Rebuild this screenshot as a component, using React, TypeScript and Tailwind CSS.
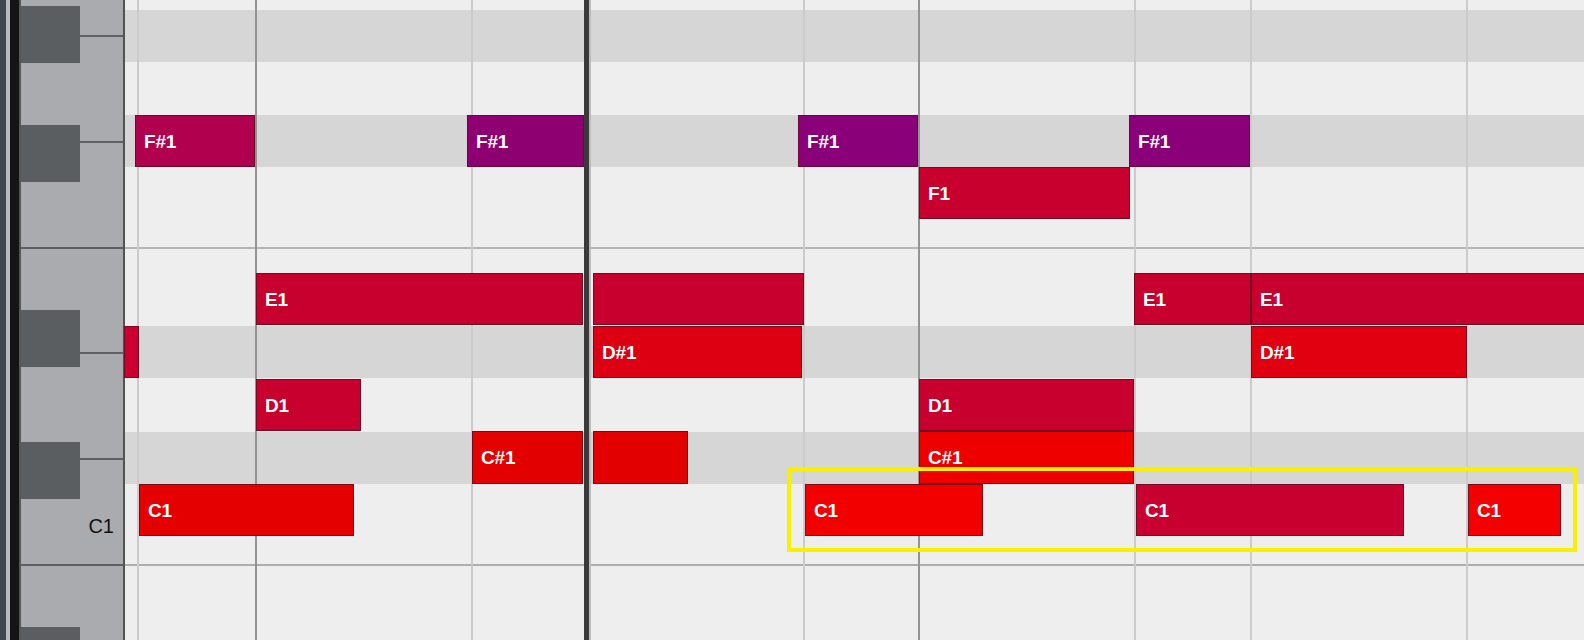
import React from "react";

type Pitch = "F#" | "F" | "E" | "D#" | "D" | "C#" | "C";

type Note = {
    x0: number; // page x of left edge
    x1: number; // page x of right edge
    pitch: Pitch;
    color: string;
    label?: string;
};

// grid starts right after the keyboard border
const GRID_LEFT = 125;

// lane top / height for each pitch row
const LANES: Record<Pitch, { top: number; height: number }> = {
    "F#": { top: 115, height: 52 },
    F: { top: 167, height: 52 },
    E: { top: 273, height: 52 },
    "D#": { top: 326, height: 52 },
    D: { top: 379, height: 52 },
    "C#": { top: 431, height: 53 },
    C: { top: 484, height: 52 },
};

const NOTES: Note[] = [
    { x0: 135, x1: 255, pitch: "F#", color: "bg-[#b1004d]", label: "F#1" },
    { x0: 467, x1: 584, pitch: "F#", color: "bg-[#8e0072]", label: "F#1" },
    { x0: 798, x1: 918, pitch: "F#", color: "bg-[#8a0078]", label: "F#1" },
    { x0: 1129, x1: 1250, pitch: "F#", color: "bg-[#8a0078]", label: "F#1" },
    { x0: 919, x1: 1130, pitch: "F", color: "bg-[#c8002e]", label: "F1" },
    { x0: 256, x1: 583, pitch: "E", color: "bg-[#c8002e]", label: "E1" },
    { x0: 593, x1: 804, pitch: "E", color: "bg-[#c8002e]" },
    { x0: 1134, x1: 1251, pitch: "E", color: "bg-[#c8002e]", label: "E1" },
    { x0: 1251, x1: 1592, pitch: "E", color: "bg-[#c8002e]", label: "E1" },
    { x0: 124, x1: 139, pitch: "D#", color: "bg-[#cc0030]" },
    { x0: 593, x1: 802, pitch: "D#", color: "bg-[#dc0012]", label: "D#1" },
    { x0: 1251, x1: 1467, pitch: "D#", color: "bg-[#e00010]", label: "D#1" },
    { x0: 256, x1: 361, pitch: "D", color: "bg-[#c8002e]", label: "D1" },
    { x0: 919, x1: 1134, pitch: "D", color: "bg-[#c8002e]", label: "D1" },
    { x0: 472, x1: 583, pitch: "C#", color: "bg-[#e20000]", label: "C#1" },
    { x0: 593, x1: 688, pitch: "C#", color: "bg-[#e20000]" },
    { x0: 919, x1: 1134, pitch: "C#", color: "bg-[#ee0000]", label: "C#1" },
    { x0: 139, x1: 354, pitch: "C", color: "bg-[#e40000]", label: "C1" },
    { x0: 805, x1: 983, pitch: "C", color: "bg-[#f20000]", label: "C1" },
    { x0: 1136, x1: 1404, pitch: "C", color: "bg-[#c80030]", label: "C1" },
    { x0: 1468, x1: 1561, pitch: "C", color: "bg-[#f50000]", label: "C1" },
];

// background lanes, top to bottom (black-key rows are darker, thin rows are octave seams)
const ROWS = [
    "h-[10px] bg-[#eeeeee]",
    "h-[52px] bg-[#d6d6d6]",
    "h-[53px] bg-[#eeeeee]",
    "h-[52px] bg-[#d6d6d6]",
    "h-[80px] bg-[#eeeeee]",
    "h-[2px] bg-[#b5b5b5]",
    "h-[77px] bg-[#eeeeee]",
    "h-[52px] bg-[#d6d6d6]",
    "h-[54px] bg-[#eeeeee]",
    "h-[52px] bg-[#d6d6d6]",
    "h-[80px] bg-[#eeeeee]",
    "h-[2px] bg-[#adadad]",
    "h-[74px] bg-[#eeeeee]",
];

// piano keys drawn as a small svg
function Keyboard() {
    const blackKeys = [6, 125, 310, 442, 627];
    const seams = [35, 141, 352, 458];
    return (
        <div className="relative h-full w-[102px] shrink-0 bg-[#a9abae]">
            <svg width="102" height="640" className="block">
                {blackKeys.map((y) => (
                    <rect key={y} x="0" y={y} width="59" height="57" fill="#5b5e61" />
                ))}
                {seams.map((y) => (
                    <rect key={y} x="59" y={y} width="43" height="2" fill="#5e6063" />
                ))}
                <rect x="0" y="247" width="102" height="2" fill="#5e6063" />
                <rect x="0" y="564" width="102" height="2" fill="#5e6063" />
            </svg>
            <span className="absolute right-[9px] top-[516px] text-[20px] leading-none text-[#111]">
                C1
            </span>
        </div>
    );
}

function NoteBlock({ note }: { note: Note }) {
    const lane = LANES[note.pitch];
    return (
        <div
            className={`absolute flex items-center border border-[#5c0f1f]/80 pl-[8px] ${note.color}`}
            style={{
                left: note.x0 - GRID_LEFT,
                width: note.x1 - note.x0,
                top: lane.top,
                height: lane.height,
            }}
        >
            {note.label && (
                <span className="text-[19px] font-bold leading-none tracking-[-0.2px] text-white">
                    {note.label}
                </span>
            )}
        </div>
    );
}

function BeatLine({ dark }: { dark?: boolean }) {
    return (
        <div className={`h-full w-[2px] shrink-0 ${dark ? "bg-[#939393]" : "bg-[#cbcbcb]"}`} />
    );
}

export default function App() {
    return (
        <div className="flex h-[640px] w-[1584px] overflow-hidden bg-[#eeeeee] font-['Liberation_Sans',Arial,sans-serif]">
            {/* window edge */}
            <div className="h-full w-[6px] shrink-0 bg-[#3d4651]" />
            <div className="h-full w-[4px] shrink-0 bg-[#b7babe]" />
            <div className="h-full w-[9px] shrink-0 bg-[#141414]" />
            <div className="h-full w-[2px] shrink-0 bg-[#55585b]" />

            <Keyboard />
            <div className="h-full w-[2px] shrink-0 bg-[#505254]" />

            {/* note grid */}
            <div className="relative h-full flex-1">
                <div className="flex h-full flex-col">
                    {ROWS.map((cls, i) => (
                        <div key={i} className={cls} />
                    ))}
                </div>

                {/* beat and bar lines */}
                <div className="absolute inset-0 flex">
                    <div className="w-[12px] shrink-0" />
                    <BeatLine />
                    <div className="w-[116px] shrink-0" />
                    <BeatLine dark />
                    <div className="w-[214px] shrink-0" />
                    <BeatLine />
                    <div className="w-[111px] shrink-0" />
                    <div className="h-full w-[5px] shrink-0 bg-[#3a3a3a]" />
                    <div className="h-full w-[2px] shrink-0 bg-[#bdbdbd]" />
                    <div className="w-[212px] shrink-0" />
                    <BeatLine />
                    <div className="w-[113px] shrink-0" />
                    <BeatLine dark />
                    <div className="w-[214px] shrink-0" />
                    <BeatLine />
                    <div className="w-[114px] shrink-0" />
                    <BeatLine />
                    <div className="w-[214px] shrink-0" />
                    <BeatLine />
                </div>

                {NOTES.map((n, i) => (
                    <NoteBlock key={i} note={n} />
                ))}

                {/* selection marquee */}
                <div className="absolute left-[662px] top-[467px] h-[85px] w-[790px] border-[4px] border-[#fbef00]" />
            </div>
        </div>
    );
}
